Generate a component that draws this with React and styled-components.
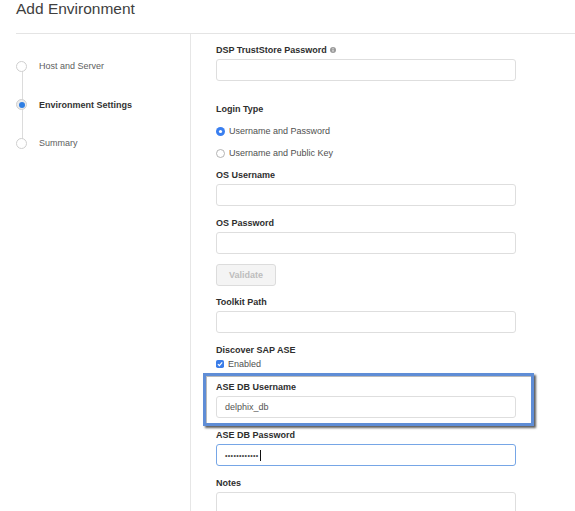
import React from "react";
import styled, { createGlobalStyle, css } from "styled-components";

const GlobalStyle = createGlobalStyle`
  html, body {
    margin: 0;
    padding: 0;
    background: #ffffff;
    overflow: hidden;
  }
  body {
    font-family: "Liberation Sans", Arial, Helvetica, sans-serif;
    color: #333;
  }
  * { box-sizing: border-box; }
`;

const Page = styled.div`
  width: 575px;
  height: 511px;
  overflow: hidden;
  display: flex;
  flex-direction: column;
`;

const Header = styled.header`
  flex: none;
  margin-left: 16px;
  height: 34px;
  border-bottom: 1px solid #e4e4e4;
`;

const Title = styled.h1`
  margin: 0;
  font-size: 15.5px;
  line-height: 18px;
  font-weight: 400;
  color: #404040;
`;

const Body = styled.div`
  flex: 1;
  display: grid;
  grid-template-columns: 175px 1fr;
  margin-left: 16px;
  min-height: 0;
`;

const Nav = styled.nav`
  border-right: 1px solid #e6e6e6;
  padding-top: 13px;
`;

const StepList = styled.ol`
  position: relative;
  list-style: none;
  margin: 0;
  padding: 0;
  &::before {
    content: "";
    position: absolute;
    left: 5.5px;
    width: 1px;
    top: 19px;
    bottom: 19px;
    background: #dcdcdc;
  }
`;

const Step = styled.li`
  position: relative;
  display: flex;
  align-items: center;
  height: 38.5px;
  font-size: 9px;
  color: ${(p) => (p.$active ? "#333" : "#5e5e5e")};
  font-weight: ${(p) => (p.$active ? 700 : 400)};
`;

const StepDot = styled.span`
  position: relative;
  z-index: 1;
  width: 11px;
  height: 11px;
  margin-right: 12px;
  border-radius: 50%;
  border: 1px solid #cfcfcf;
  background: ${(p) => (p.$active ? "#ececec" : "#fff")};
  display: flex;
  align-items: center;
  justify-content: center;
  ${(p) =>
    p.$active &&
    css`
      &::after {
        content: "";
        width: 6px;
        height: 6px;
        border-radius: 50%;
        background: #2f7ee3;
      }
    `}
`;

const FormPanel = styled.section`
  padding: 10px 0 0 25px;
`;

const Group = styled.div`
  position: relative;
  width: 300px;
  margin-bottom: ${(p) => p.$mb ?? 11}px;
  ${(p) =>
    p.$highlight &&
    css`
      &::after {
        content: "";
        position: absolute;
        top: -8px;
        bottom: -8px;
        left: -13px;
        right: -18px;
        border: 3px solid #5f8dd6;
        box-shadow: 2px 2px 2px rgba(40, 40, 40, 0.75),
          inset 1px 1px 0 rgba(60, 60, 60, 0.35);
        pointer-events: none;
      }
    `}
`;

const Label = styled.div`
  display: flex;
  align-items: center;
  gap: 3px;
  font-size: 9px;
  line-height: 12px;
  font-weight: 700;
  color: #2e2e2e;
  margin-bottom: ${(p) => p.$mb ?? 3}px;
`;

const Field = styled.div`
  display: flex;
  align-items: center;
  width: 300px;
  height: ${(p) => p.$h ?? 22}px;
  padding-left: 8px;
  border: 1px solid ${(p) => (p.$focus ? "#76a6e6" : "#dedede")};
  border-radius: 3px;
  background: #fff;
  font-size: 9px;
  color: #555;
`;

const Dots = styled.span`
  font-size: 7px;
  letter-spacing: 0.35px;
  color: #444;
`;

const Caret = styled.span`
  display: inline-block;
  width: 1px;
  height: 11px;
  margin-left: 1px;
  background: #111;
`;

const Options = styled.div`
  display: flex;
  flex-direction: column;
  gap: 10px;
  margin-top: ${(p) => p.$mt ?? 0}px;
`;

const Option = styled.label`
  display: flex;
  align-items: center;
  gap: 4px;
  height: 12px;
  font-size: 9px;
  color: #505050;
`;

const Button = styled.button`
  width: 60px;
  height: 22px;
  padding: 0;
  border: 1px solid #dcdcdc;
  border-radius: 3px;
  background: #f4f4f4;
  color: #bdbdbd;
  font-family: inherit;
  font-size: 9px;
  font-weight: 700;
`;

const InfoIcon = () => (
  <svg width="6" height="6" viewBox="0 0 6 6" aria-hidden="true">
    <circle cx="3" cy="3" r="3" fill="#9a9a9a" />
    <circle cx="3" cy="1.6" r="0.5" fill="#fff" />
    <path d="M3 2.6v2.1" stroke="#fff" strokeWidth="0.9" />
  </svg>
);

const Radio = ({ checked }) => (
  <svg width="9" height="9" viewBox="0 0 9 9" aria-hidden="true">
    {checked ? (
      <>
        <circle cx="4.5" cy="4.5" r="4.5" fill="#3a7ff0" />
        <circle cx="4.5" cy="4.5" r="1.6" fill="#fff" />
      </>
    ) : (
      <circle cx="4.5" cy="4.5" r="4" fill="#fff" stroke="#aaa" strokeWidth="0.9" />
    )}
  </svg>
);

const Checkbox = () => (
  <svg width="8" height="8" viewBox="0 0 8 8" aria-hidden="true">
    <rect x="0" y="0" width="8" height="8" rx="1.8" fill="#3b7de8" />
    <path d="M1.9 4.1 L3.4 5.6 L6.2 2.4" stroke="#fff" strokeWidth="1.2" fill="none" />
  </svg>
);

const steps = [
  { name: "Host and Server" },
  { name: "Environment Settings", active: true },
  { name: "Summary" },
];

export default function App() {
  return (
    <>
      <GlobalStyle />
      <Page>
        <Header>
          <Title>Add Environment</Title>
        </Header>
        <Body>
          <Nav>
            <StepList>
              {steps.map((s) => (
                <Step key={s.name} $active={s.active}>
                  <StepDot $active={s.active} />
                  {s.name}
                </Step>
              ))}
            </StepList>
          </Nav>
          <FormPanel>
            <Group $mb={22}>
              <Label>
                DSP TrustStore Password <InfoIcon />
              </Label>
              <Field />
            </Group>

            <Group $mb={10}>
              <Label $mb={0}>Login Type</Label>
              <Options $mt={10}>
                <Option>
                  <Radio checked />
                  Username and Password
                </Option>
                <Option>
                  <Radio />
                  Username and Public Key
                </Option>
              </Options>
            </Group>

            <Group>
              <Label>OS Username</Label>
              <Field />
            </Group>

            <Group $mb={10}>
              <Label>OS Password</Label>
              <Field />
            </Group>

            <Group $mb={10}>
              <Button type="button">Validate</Button>
            </Group>

            <Group>
              <Label>Toolkit Path</Label>
              <Field />
            </Group>

            <Group>
              <Label $mb={0}>Discover SAP ASE</Label>
              <Options $mt={2}>
                <Option>
                  <Checkbox />
                  Enabled
                </Option>
              </Options>
            </Group>

            <Group $highlight>
              <Label>ASE DB Username</Label>
              <Field>delphix_db</Field>
            </Group>

            <Group>
              <Label>ASE DB Password</Label>
              <Field $focus>
                <Dots>••••••••••••</Dots>
                <Caret />
              </Field>
            </Group>

            <Group>
              <Label>Notes</Label>
              <Field $h={44} />
            </Group>
          </FormPanel>
        </Body>
      </Page>
    </>
  );
}
